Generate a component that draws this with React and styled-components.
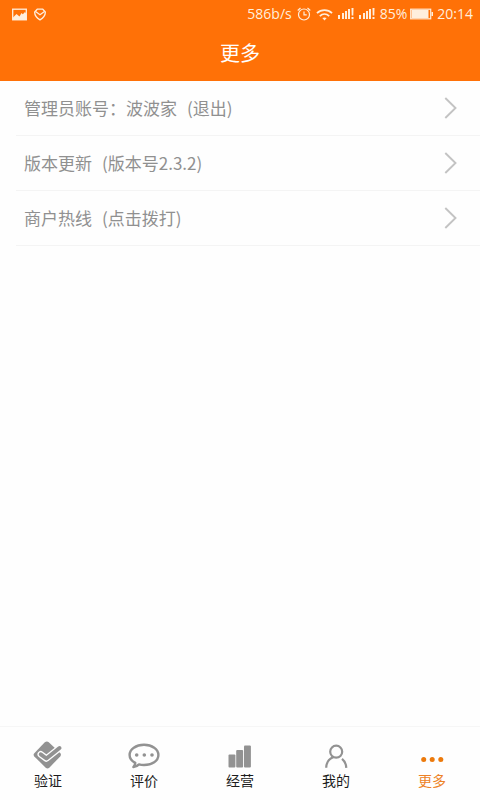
import React from "react";
import styled, { createGlobalStyle } from "styled-components";

const GlobalStyle = createGlobalStyle`
  * {
    box-sizing: border-box;
  }

  body {
    margin: 0;
    background-color: #fefefe;
    font-family: "Noto Sans CJK SC", "Open Sans", sans-serif;
  }
`;

const Page = styled.div`
  min-height: 100vh;
  display: flex;
  flex-direction: column;
`;

const Top = styled.header`
  background-color: #ff7107;
  color: #fff;
`;

const StatusBar = styled.div`
  height: 28px;
  padding: 0 7px 0 12px;
  display: flex;
  align-items: center;
  justify-content: space-between;
  color: #ffeedd;
  font-family: "Open Sans", sans-serif;
  font-size: 14px;
  line-height: 20px;
`;

const StatusGroup = styled.div`
  display: flex;
  align-items: center;
  gap: ${({ $gap }) => $gap}px;
`;

const Title = styled.h1`
  height: 53px;
  margin: 0;
  text-align: center;
  font-family: "AR PL UKai CN", KaiTi, "Noto Sans CJK SC", sans-serif;
  font-size: 20px;
  font-weight: 400;
  line-height: 50px;
`;

const List = styled.ul`
  flex: 1;
  margin: 0;
  padding: 0 0 0 16px;
  list-style: none;
`;

const Item = styled.li`
  border-bottom: 1px solid #f4f4f4;
`;

const ItemButton = styled.button`
  width: 100%;
  height: 54px;
  padding: 0 23px 0 8px;
  display: flex;
  align-items: center;
  justify-content: space-between;
  border: none;
  background: none;
  color: #909090;
  font-family: KaiTi, "Noto Sans CJK SC", sans-serif;
  font-size: 17px;
  font-weight: 400;
  line-height: 24px;
  text-align: left;
  cursor: pointer;
`;

const ItemText = styled.span`
  display: flex;
  gap: 10px;
`;

const TabBar = styled.nav`
  height: 74px;
  padding-top: 14px;
  display: flex;
  border-top: 1px solid #f6f6f6;
`;

const Tab = styled.a`
  flex: 1;
  display: flex;
  flex-direction: column;
  align-items: center;
  color: ${({ $active }) => ($active ? "#ed8226" : "#1c1c1c")};
  font-size: 14px;
  line-height: 20px;
  text-decoration: none;
`;

const TabIcon = styled.svg`
  width: 32px;
  height: 29px;
  color: ${({ $active }) => ($active ? "#ec7a0c" : "#929292")};
`;

const PictureIcon = () => (
  <svg width="15" height="13" viewBox="0 0 15 13">
    <rect x="0.7" y="1.2" width="13.6" height="10.6" fill="none" stroke="currentColor" strokeWidth="1.3" />
    <path d="M1 12V9.500L4.500 6l3 2.500L9.500 5l1.300 1.200L13 4l1.500 2v6z" fill="currentColor" />
  </svg>
);

const HeartIcon = () => (
  <svg width="12" height="13" viewBox="0 0 12 13" fill="none" stroke="currentColor" strokeWidth="1.3">
    <path d="M3.2 1.2h5.6L11.300 4c.2 3-2 5.800-5.300 7.900C2.700 9.800.5 7 .7 4z" strokeLinejoin="round" />
    <path d="M1.500 3.500L6 6.800l4.500-3.300" />
  </svg>
);

const AlarmIcon = () => (
  <svg width="14" height="14" viewBox="0 0 14 14" fill="none" stroke="currentColor" strokeWidth="1.2">
    <circle cx="7" cy="7.5" r="5.5" />
    <path d="M7 4.500v3.300h2.700M.7 3.500L3.500 1M13.300 3.500L10.500 1" />
  </svg>
);

const WifiIcon = () => (
  <svg width="17" height="13" viewBox="0 0 18 13" fill="none" stroke="currentColor" strokeWidth="1.8">
    <path d="M1 5C5.500.7 12.500.7 17 5M4 8.200c3-2.700 7-2.700 10 0" />
    <path d="M6.700 10.300c1.500-1 3.100-1 4.600 0L9 12.800z" fill="currentColor" stroke="none" />
  </svg>
);

const SignalIcon = () => (
  <svg width="16" height="12" viewBox="0 0 16 12" fill="currentColor">
    <path d="M0 7h2v4H0zM4 5h2v6H4zM7 3h2v8H7zM10 1h2v10h-2zM13.500 0h2l-.2 7.500h-1.600zM13.500 9h2v2h-2z" />
  </svg>
);

const BatteryIcon = () => (
  <svg width="24" height="12" viewBox="0 0 24 12">
    <rect x="0.7" y="1.2" width="20" height="9.6" fill="none" stroke="currentColor" strokeWidth="1.2" />
    <path d="M1.500 2h17v8h-17zM21.500 4H23v4h-1.500z" fill="currentColor" />
  </svg>
);

const Chevron = () => (
  <svg width="13" height="22" viewBox="0 0 13 22" fill="none" stroke="#c3c3c3" strokeWidth="1.9">
    <path d="M1.300 1L11.500 11 1.300 21" />
  </svg>
);

const VerifyShape = () => (
  <>
    <path
      d="M12.800 1.200q2-1.500 4 0L28.200 12q1.500 1.700 0 3.400L17.300 26.700q-1.800 1.500-3.600 0L2.300 15.400q-1.400-1.600 0-3.200z"
      fill="currentColor"
    />
    <g fill="none" strokeLinejoin="round" strokeLinecap="round">
      <path d="M8.800 13.300l5.600 4.200L29.500 5.500" stroke="#fefefe" strokeWidth="6.6" />
      <path d="M8.800 13.300l5.600 4.200L27.500 7" stroke="currentColor" strokeWidth="4" />
    </g>
  </>
);

const CommentShape = () => (
  <>
    <path
      d="M16 3.800c8 0 14.400 4.300 14.400 10.200S24 24 16 24c-1.800 0-3.500-.2-5-.6-1.500 1.600-3.500 2.500-5.600 2.700 1.200-1.300 1.800-2.700 1.900-4.200C4 20.200 1.600 17.500 1.600 14 1.600 8.100 8 3.800 16 3.800z"
      fill="none"
      stroke="currentColor"
      strokeWidth="2.4"
      strokeLinejoin="round"
    />
    <circle cx="8.7" cy="14" r="1.8" fill="currentColor" />
    <circle cx="16.3" cy="14" r="1.8" fill="currentColor" />
    <circle cx="24" cy="14" r="1.8" fill="currentColor" />
  </>
);

const ChartShape = () => (
  <g fill="currentColor">
    <rect x="4.5" y="13.5" width="6.9" height="13" rx="1" />
    <rect x="12.2" y="9" width="6.9" height="17.5" rx="1" />
    <rect x="20" y="4.5" width="6.9" height="22" rx="1" />
  </g>
);

const PersonShape = () => (
  <g fill="none" stroke="currentColor" strokeWidth="2.2">
    <circle cx="16.2" cy="10.7" r="6" />
    <path d="M6.200 26.800c.2-5.600 3.500-9.300 7-10.600M22 17.800c2.400 1.900 4 4.900 4.300 9" />
  </g>
);

const MoreShape = () => (
  <g fill="currentColor">
    <circle cx="7.7" cy="18.5" r="2.5" />
    <circle cx="16.2" cy="18.5" r="2.5" />
    <circle cx="24.8" cy="18.5" r="2.5" />
  </g>
);

// \uFF1A is the full-width colon
const items = [
  { label: "管理员账号\uFF1A波波家", detail: "(退出)" },
  { label: "版本更新", detail: "(版本号2.3.2)" },
  { label: "商户热线", detail: "(点击拨打)" },
];

const tabs = [
  { id: "verify", label: "验证", Shape: VerifyShape },
  { id: "reviews", label: "评价", Shape: CommentShape },
  { id: "business", label: "经营", Shape: ChartShape },
  { id: "mine", label: "我的", Shape: PersonShape },
  { id: "more", label: "更多", Shape: MoreShape },
];

const App = () => {
  const current = "more";

  return (
    <>
      <GlobalStyle />
      <Page>
        <Top>
          <StatusBar>
            <StatusGroup $gap={7}>
              <PictureIcon />
              <HeartIcon />
            </StatusGroup>
            <StatusGroup $gap={5}>
              <span>586b/s</span>
              <AlarmIcon />
              <WifiIcon />
              <SignalIcon />
              <SignalIcon />
              <StatusGroup $gap={3}>
                <span>85%</span>
                <BatteryIcon />
                <span>20:14</span>
              </StatusGroup>
            </StatusGroup>
          </StatusBar>
          <Title>更多</Title>
        </Top>
        <List>
          {items.map(({ label, detail }) => (
            <Item key={label}>
              <ItemButton type="button">
                <ItemText>
                  <span>{label}</span>
                  <span>{detail}</span>
                </ItemText>
                <Chevron />
              </ItemButton>
            </Item>
          ))}
        </List>
        <TabBar>
          {tabs.map(({ id, label, Shape }) => (
            <Tab key={id} href={`#${id}`} $active={id === current}>
              <TabIcon viewBox="0 0 32 29" $active={id === current}>
                <Shape />
              </TabIcon>
              {label}
            </Tab>
          ))}
        </TabBar>
      </Page>
    </>
  );
};

export default App;
